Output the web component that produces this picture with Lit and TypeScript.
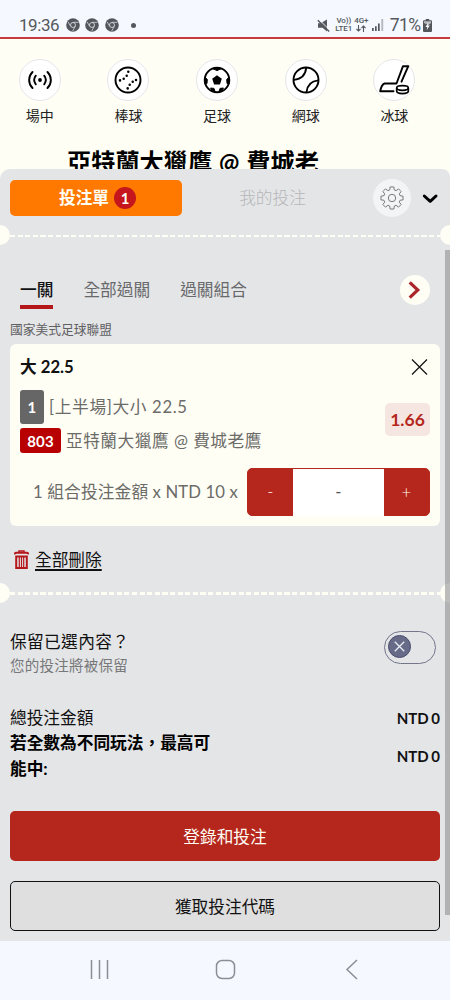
import { LitElement, html, css, svg } from "lit";
import { customElement } from "lit/decorators.js";

const chrome = html`<svg class="chrome" width="14" height="14" viewBox="0 0 14 14">
  <circle cx="7" cy="7" r="6.8" fill="#53575c" />
  <circle cx="7" cy="7" r="2.5" fill="none" stroke="#d5d9df" stroke-width=".9" />
  <path d="M7 4.3H12.500M4.7 8.3L2 3.800M9.3 8.3L6.700 13" stroke="#d5d9df" stroke-width=".8" />
</svg>`;

const sports = [
  {
    label: "場中",
    icon: svg`<circle cx="20" cy="20" r="1.9" fill="#000" stroke="none"/>
      <path d="M15.800 15.700c-2 2.600-2 6 0 8.600M24.200 15.700c2 2.600 2 6 0 8.600M12.500 12c-4.500 4.500-4.500 11.500 0 16M27.500 12c4.500 4.500 4.500 11.500 0 16" stroke-width="1.9" stroke-linecap="round"/>`,
  },
  {
    label: "棒球",
    icon: svg`<circle cx="20" cy="20" r="12.5" stroke-width="1.9"/>
      <path d="M20.300 11.700v.1M18.700 15.700v.1M15.700 18.700v.1M12 20.300v.1M28 20v.1M24.700 21.700v.1M21.700 24.700v.1M19.700 28.300v.1" stroke-width="2.5" stroke-linecap="round"/>`,
  },
  {
    label: "足球",
    icon: svg`<circle cx="20" cy="20" r="12.3" stroke-width="1.9"/>
      <path d="M20 15.2l4.8 3.500-1.900 5.700h-5.800l-1.900-5.700z" fill="#000" stroke="none"/>
      <path d="M15.500 8.600l4.500 2 4.500-2-4.500-1.200zM8 17l2.300 2.500-.3 4-2 .5-.5-4zM32 17l-2.300 2.500.3 4 2 .5.500-4zM13.500 28l3.500.4 1 3.200-2.500-.8zM26.500 28l-3.500.4-1 3.200 2.500-.8z" fill="#000"/>`,
  },
  {
    label: "網球",
    icon: svg`<circle cx="20" cy="20" r="12.5" stroke-width="1.9"/>
      <path d="M8 19.800C14.800 19.200 19.500 15.500 20.200 7.700M20.500 32.200C21.300 24.800 26 21 32.200 20.400" stroke-width="1.8"/>`,
  },
  {
    label: "冰球",
    icon: svg`<path d="M27.500 21.700L34.300 6.200H29L22.500 23.500H10.500Q7.500 24.500 6.200 31.300H19.500" stroke-width="1.9" stroke-linejoin="round" stroke-linecap="round"/>
      <ellipse cx="28.500" cy="28" rx="5.800" ry="2.300" stroke-width="1.7"/>
      <path d="M22.700 28v3.300c0 3 11.600 3 11.600 0V28" stroke-width="1.7"/>`,
  },
];

/** Outline of an eight-toothed cog centred in a 38 unit square. */
const cogPath = (() => {
  const points: string[] = [];
  for (let i = 0; i < 8; i++) {
    const centre = (i * Math.PI) / 4 - Math.PI / 2;
    for (const [offset, radius] of [[-0.27, 8.4], [-0.17, 11.2], [0.17, 11.2], [0.27, 8.4]]) {
      const x = 19 + radius * Math.cos(centre + offset);
      const y = 19 + radius * Math.sin(centre + offset);
      points.push(`${x.toFixed(2)} ${y.toFixed(2)}`);
    }
  }
  return `M${points.join("L")}Z`;
})();

@customElement("status-bar")
class StatusBar extends LitElement {
  static styles = css`
    :host { display: flex; align-items: center; box-sizing: border-box; height: 37px; padding: 13px 18px 0 19px; background: #f5f9ff; color: #54585d; font: 17px Roboto, sans-serif; }
    .time { width: 46.500px; letter-spacing: -.45px; font-size: 17px; }
    .chrome { margin-right: 5.700px; }
    .dot { width: 5px; height: 5px; border-radius: 50%; background: #54585d; margin-left: 6px; }
    .grow { flex: 1; }
    .net { display: flex; flex-direction: column; align-items: center; font: 500 8px/8px Roboto, sans-serif; height: 16px; }
    .volte { width: 17px; margin-left: 5px; }
    .data { width: 14px; margin-left: 2px; }
    .net span { white-space: nowrap; letter-spacing: -.1px; }
    .signal { margin-left: 4px; }
    .pct { margin-left: 5.500px; font-size: 17.500px; letter-spacing: -.6px; }
    .battery { margin-left: 2.500px; }
  `;
  render() {
    return html`
      <span class="time">19:36</span>${chrome}${chrome}${chrome}<span class="dot"></span>
      <span class="grow"></span>
      <svg width="13" height="13" viewBox="0 0 13 13"><path d="M1 4.300h2.500L10 .5v12L5.500 8.800H1z" fill="#54585d"/><path d="M1.800.3l11 11" stroke="#f5f9ff" stroke-width="1"/><path d="M.8 1.200l11.400 11.200" stroke="#54585d" stroke-width="1.400"/></svg>
      <span class="net volte"><span>Vo))</span><span>LTE1</span></span>
      <span class="net data"><span>4G+</span><svg width="10" height="7" viewBox="0 0 10 7" fill="none" stroke="#54585d" stroke-width="1.100"><path d="M2.500 0v6M.5 4l2 2 2-2M7.500 7V1M5.500 3l2-2 2 2"/></svg></span>
      <svg class="signal" width="12" height="12" viewBox="0 0 12 12" fill="#54585d"><path d="M0 9h1.700v3H0zM3 7.200h1.700V12H3zM6 4.500h1.700V12H6z"/><path d="M9.300 0H11.200v12H9.300z" opacity=".4"/></svg>
      <span class="pct">71%</span>
      <svg class="battery" width="9" height="13" viewBox="0 0 9 13"><path d="M2.700 0h3.600v1.300H8q1 0 1 1V12q0 1-1 1H1q-1 0-1-1V2.300q0-1 1-1h1.700z" fill="#54585d"/><path d="M1 2.300h7v1.800L5.500 6 1 4z" fill="#b9bdc2"/><path d="M5.500 3.500L2.500 8h1.800L3.700 11 6.800 6.500H4.900z" fill="#fff"/></svg>
    `;
  }
}

@customElement("ticket-divider")
class TicketDivider extends LitElement {
  static styles = css`
    :host { display: flex; height: 20px; align-items: center; justify-content: space-between; }
    .notch { width: 10px; height: 20px; background: #fffef5; }
    .left { border-radius: 0 10px 10px 0; }
    .right { border-radius: 10px 0 0 10px; }
    .dashes { flex: 1; height: 2.500px; margin-top: 2px; background: repeating-linear-gradient(90deg, #fffef5 0 5.200px, transparent 5.200px 7.620px); }
  `;
  render() {
    return html`<span class="notch left"></span><span class="dashes"></span><span class="notch right"></span>`;
  }
}

@customElement("app-root")
class AppRoot extends LitElement {
  static styles = css`
    :host { display: flex; flex-direction: column; height: 1000px; overflow: hidden; background: #fffef5; color: #111; font: 16.700px/24px Lato, "Noto Sans CJK TC", sans-serif; }
    * { box-sizing: border-box; }
    .page { height: 132px; border-top: 2px solid #c73a3e; flex: none; }
    .sports { display: grid; grid-template-columns: repeat(5, 88.650px); margin-left: -4.500px; padding-top: 20px; }
    .sport { display: flex; flex-direction: column; align-items: center; font-size: 14px; line-height: 20px; color: #222; }
    .round { width: 42px; height: 42px; border: 1px solid #e6e6ea; border-radius: 50%; background: #fff; margin-bottom: 5px; }
    .match { font-size: 24.200px; line-height: 32px; font-weight: 700; color: #000; padding: 20px 0 0 67px; white-space: nowrap; word-spacing: 1px; }
    .sheet { position: relative; height: 772px; flex: none; background: #e4e5e7; border-radius: 10px 8px 0 0; }
    .head { display: flex; align-items: center; height: 48px; padding: 9px 10px 0; }
    .slip { display: flex; align-items: center; justify-content: center; gap: 5px; width: 172px; height: 36px; padding-left: 3px; border-radius: 5px; background: #ff7900; color: #fffef5; font-weight: 700; }
    .count { width: 22px; height: 22px; border-radius: 50%; background: #c4161c; font-size: 15px; line-height: 22px; text-align: center; }
    .mine { width: 181px; text-align: center; color: #b5b6b9; padding-top: 1px; font-weight: 300; }
    .gear { width: 38px; height: 38px; border-radius: 50%; background: #f3f4f6; margin-left: 9.500px; }
    .chev { margin-left: 10.500px; }
    .div1 { margin-top: 8px; }
    .tabs { display: flex; padding: 33px 20px 0; height: 65px; gap: 30px; color: #68696b; }
    .tab { height: 31px; }
    .on { color: #111; font-weight: 500; border-bottom: 4px solid #b5181b; }
    .next { margin-left: auto; margin-top: -3.500px; margin-right: .5px; width: 30px; height: 30px; border-radius: 50%; background: #fffef5; }
    .league { padding: 8px 10px 0; height: 34px; font-size: 12.750px; line-height: 22px; color: #5f6062; }
    .card { display: flex; flex-direction: column; margin: 0 10px; height: 182px; border-radius: 6px; background: #fffef5; padding: 11px 10px 0; color: #6b6b68; }
    .title { display: flex; align-items: center; justify-content: space-between; height: 24px; color: #111; font-weight: 700; }
    .pick { display: flex; align-items: center; justify-content: space-between; height: 64px; margin-top: 10.500px; }
    .line { display: flex; align-items: center; gap: 5px; white-space: nowrap; }
    .first { letter-spacing: .65px; }
    .second { letter-spacing: .5px; }
    .num { border-radius: 3px; background: #666; color: #fff; font-size: 15px; font-weight: 700; text-align: center; letter-spacing: .2px; }
    .one { width: 24px; height: 34px; line-height: 35px; }
    .two { width: 41px; height: 25px; line-height: 26px; background: #b80000; }
    .line + .line { margin-top: 4.500px; }
    .odds { width: 45px; height: 33px; border-radius: 5px; background: #f6e6e1; color: #b5261c; font-size: 17.500px; font-weight: 700; text-align: center; line-height: 33px; margin-top: -5px; }
    .stake { display: flex; align-items: center; justify-content: flex-end; gap: 9px; margin-top: 14.500px; white-space: nowrap; letter-spacing: .13px; }
    .step { display: grid; grid-template-columns: 45px 1fr 45px; width: 183px; height: 48px; border: 1px solid #b5261c; border-radius: 5px; background: #b5261c; text-align: center; line-height: 47px; color: #fffef5; font-weight: 300; }
    .val { background: #fff; color: #555; font-weight: 400; }
    .clear { display: flex; align-items: center; gap: 6px; height: 24px; margin: 22px 14px 0; }
    .clear u { text-underline-offset: 3px; text-decoration-thickness: 1.500px; }
    .div2 { margin-top: 10.500px; }
    .keep { display: flex; justify-content: space-between; padding: 27px 14px 0 10px; height: 103.500px; }
    .q { letter-spacing: .35px; line-height: 25px; }
    .sub { font-size: 14.500px; line-height: 22px; letter-spacing: .25px; color: #77787a; }
    .toggle { width: 52.500px; height: 33px; border: 1.500px solid #73758a; border-radius: 17px; padding: 3.500px; margin-top: 1px; }
    .knob { display: block; width: 23px; height: 23px; border-radius: 50%; background: #686b88; border: 1.500px solid #484b6b; }
    .sum { display: flex; justify-content: space-between; align-items: center; padding: 0 10px; line-height: 25.300px; }
    .most { width: 205px; font-weight: 700; color: #000; }
    .money { font-size: 15px; font-weight: 700; word-spacing: -1px; }
    .btn { display: flex; align-items: center; justify-content: center; height: 50px; margin: 0 10px; border-radius: 5px; padding-top: 2px; }
    .login { margin-top: 29px; background: #b5261c; color: #fffef5; }
    .code { margin-top: 20px; background: #dfdfdf; border: 1px solid #111; }
    .scroll { position: absolute; right: 0; top: 81px; width: 5px; height: 665px; background: rgba(140, 141, 143, .58); }
    .nav { flex: 1; background: #f5f9ff; display: flex; justify-content: space-between; align-items: center; padding: 0 91px 2px 89px; }
    .home { margin-right: 4px; }
  `;
  render() {
    return html`
      <status-bar></status-bar>
      <div class="page">
        <div class="sports">
          ${sports.map((s) => html`<div class="sport"><span class="round"><svg width="40" height="40" viewBox="0 0 40 40" fill="none" stroke="#000">${s.icon}</svg></span>${s.label}</div>`)}
        </div>
        <div class="match">亞特蘭大獵鷹 @ 費城老</div>
      </div>
      <div class="sheet">
        <div class="head">
          <div class="slip">投注單<span class="count">1</span></div>
          <div class="mine">我的投注</div>
          <svg class="gear" viewBox="0 0 38 38" fill="none" stroke="#77797e" stroke-width="1">
            <circle cx="19" cy="19" r="3.700"/>
            <path stroke-linejoin="round" d=${cogPath} />
          </svg>
          <svg class="chev" width="18" height="14" viewBox="0 0 18 14" fill="none" stroke="#000" stroke-width="3" stroke-linecap="round" stroke-linejoin="round"><path d="M3.300 5L9.200 10.300 15 5"/></svg>
        </div>
        <ticket-divider class="div1"></ticket-divider>
        <div class="tabs">
          <span class="tab on">一關</span><span class="tab">全部過關</span><span class="tab">過關組合</span>
          <svg class="next" viewBox="0 0 30 30" fill="none" stroke="#a9262b" stroke-width="3.200"><path d="M9.700 7.300L17.800 15 9.700 22.700"/></svg>
        </div>
        <div class="league">國家美式足球聯盟</div>
        <div class="card">
          <div class="title">大 22.5<svg width="20" height="20" viewBox="0 0 20 20" stroke="#111" stroke-width="1.200"><path d="M2 2.500l15 15M17 2.500l-15 15"/></svg></div>
          <div class="pick">
            <div>
              <div class="line first"><span class="num one">1</span><span>[上半場]大小 22.5</span></div>
              <div class="line second"><span class="num two">803</span><span>亞特蘭大獵鷹 @ 費城老鷹</span></div>
            </div>
            <div class="odds">1.66</div>
          </div>
          <div class="stake"><span>1 組合投注金額 x NTD 10 x</span><div class="step"><span>-</span><span class="val">-</span><span>+</span></div></div>
        </div>
        <div class="clear">
          <svg width="15" height="20" viewBox="0 0 15 20" fill="none" stroke="#b5181b"><path d="M0 3.800L2 2.800h11l2 1" stroke-width="2"/><path d="M5 3V1h5v2" stroke-width="1.500"/><path d="M2.200 6.500h10.600V18H2.200z" stroke-width="2"/><path d="M5.300 7v11M7.500 7v11M9.700 7v11" stroke-width="1.200"/></svg>
          <u>全部刪除</u>
        </div>
        <ticket-divider class="div2"></ticket-divider>
        <div class="keep">
          <div><div class="q">保留已選內容？</div><div class="sub">您的投注將被保留</div></div>
          <div class="toggle"><svg class="knob" viewBox="0 0 20 20" stroke="#eeeef5" stroke-width="1.200"><path d="M5.500 5.500l9 9M14.500 5.500l-9 9"/></svg></div>
        </div>
        <div class="sum"><span>總投注金額</span><span class="money">NTD 0</span></div>
        <div class="sum"><span class="most">若全數為不同玩法，最高可能中:</span><span class="money">NTD 0</span></div>
        <div class="btn login">登錄和投注</div>
        <div class="btn code">獲取投注代碼</div>
        <div class="scroll"></div>
      </div>
      <div class="nav">
        <svg width="21" height="21" viewBox="0 0 21 21" stroke="#8b8e93" stroke-width="1.500"><path d="M2.500 1v19M10.500 1v19M18.500 1v19"/></svg>
        <svg class="home" width="21" height="21" viewBox="0 0 21 21" fill="none" stroke="#8b8e93" stroke-width="1.500"><rect x="1.500" y="1.500" width="18" height="18" rx="5.500"/></svg>
        <svg width="14" height="21" viewBox="0 0 14 21" fill="none" stroke="#8b8e93" stroke-width="1.500"><path d="M12 1L2 10.500 12 20"/></svg>
      </div>
    `;
  }
}
